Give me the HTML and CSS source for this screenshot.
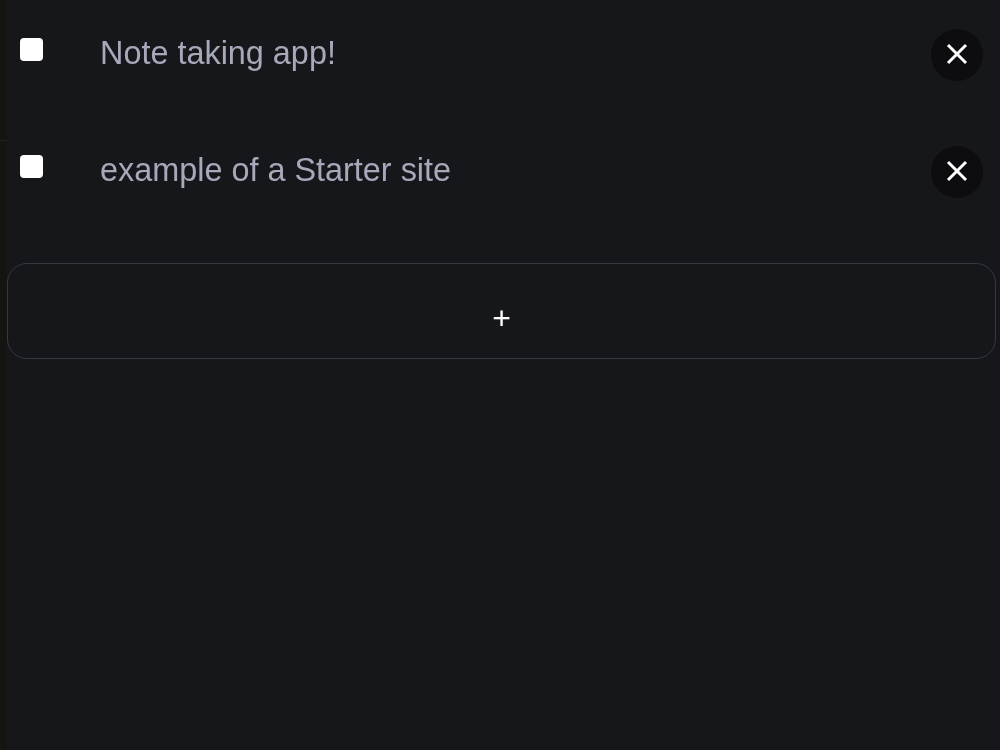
FILE: index.html
```html
<!DOCTYPE html>
<html>
<head>
  <meta charset="UTF-8">
  <title>Notes</title>
  <link rel="stylesheet" href="styles.css">
</head>
<body>
  <div class="gutter"></div>
  <div class="notes">
    <div class="note">
      <input type="checkbox" class="note-check">
      <div class="note-text">Note taking app!</div>
      <button class="note-delete">
        <svg viewBox="0 0 24 24" width="24" height="24"><path d="M3 3 21 21M21 3 3 21"/></svg>
      </button>
    </div>
    <div class="note">
      <input type="checkbox" class="note-check">
      <div class="note-text">example of a Starter site</div>
      <button class="note-delete">
        <svg viewBox="0 0 24 24" width="24" height="24"><path d="M3 3 21 21M21 3 3 21"/></svg>
      </button>
    </div>
    <button class="add-note">+</button>
  </div>
</body>
</html>
```

FILE: styles.css
```css
body {
  display: flex;
  margin: 0;
  height: 750px;
  background: #16171b;
  font-family: "Liberation Sans", Arial, sans-serif;
}

.gutter {
  flex: none;
  width: 7px;
  background: linear-gradient(#141413 140px, #232325 140px, #232325 141px, #141413 141px);
}

.notes {
  flex: 1;
  padding: 29px 0 0 0;
}

.note {
  display: flex;
  align-items: flex-start;
  height: 117px;
  padding-right: 3px;
}

.note-check {
  appearance: none;
  flex: none;
  width: 23px;
  height: 23px;
  margin: 9px 0 0 13px;
  border-radius: 4px;
  background: #fff;
}

.note-text {
  flex: 1;
  margin-left: 57px;
  padding-top: 6px;
  font-size: 32.4px;
  line-height: 37px;
  color: #a6a9b9;
  will-change: transform;
}

.note-delete {
  display: flex;
  align-items: center;
  justify-content: center;
  flex: none;
  width: 52px;
  height: 52px;
  margin-right: 14px;
  padding: 0;
  border: none;
  border-radius: 50%;
  background: #0d0d0f;
}

.note-delete svg {
  margin: -2px 0 0 0;
}

.note-delete svg path {
  fill: none;
  stroke: #fff;
  stroke-width: 3;
}

.add-note {
  display: block;
  width: 989px;
  height: 96px;
  padding: 15px 0 0;
  border: 1px solid #363841;
  border-radius: 20px;
  background: transparent;
  color: #fff;
  font-family: inherit;
  font-size: 32px;
  will-change: transform;
}
```
